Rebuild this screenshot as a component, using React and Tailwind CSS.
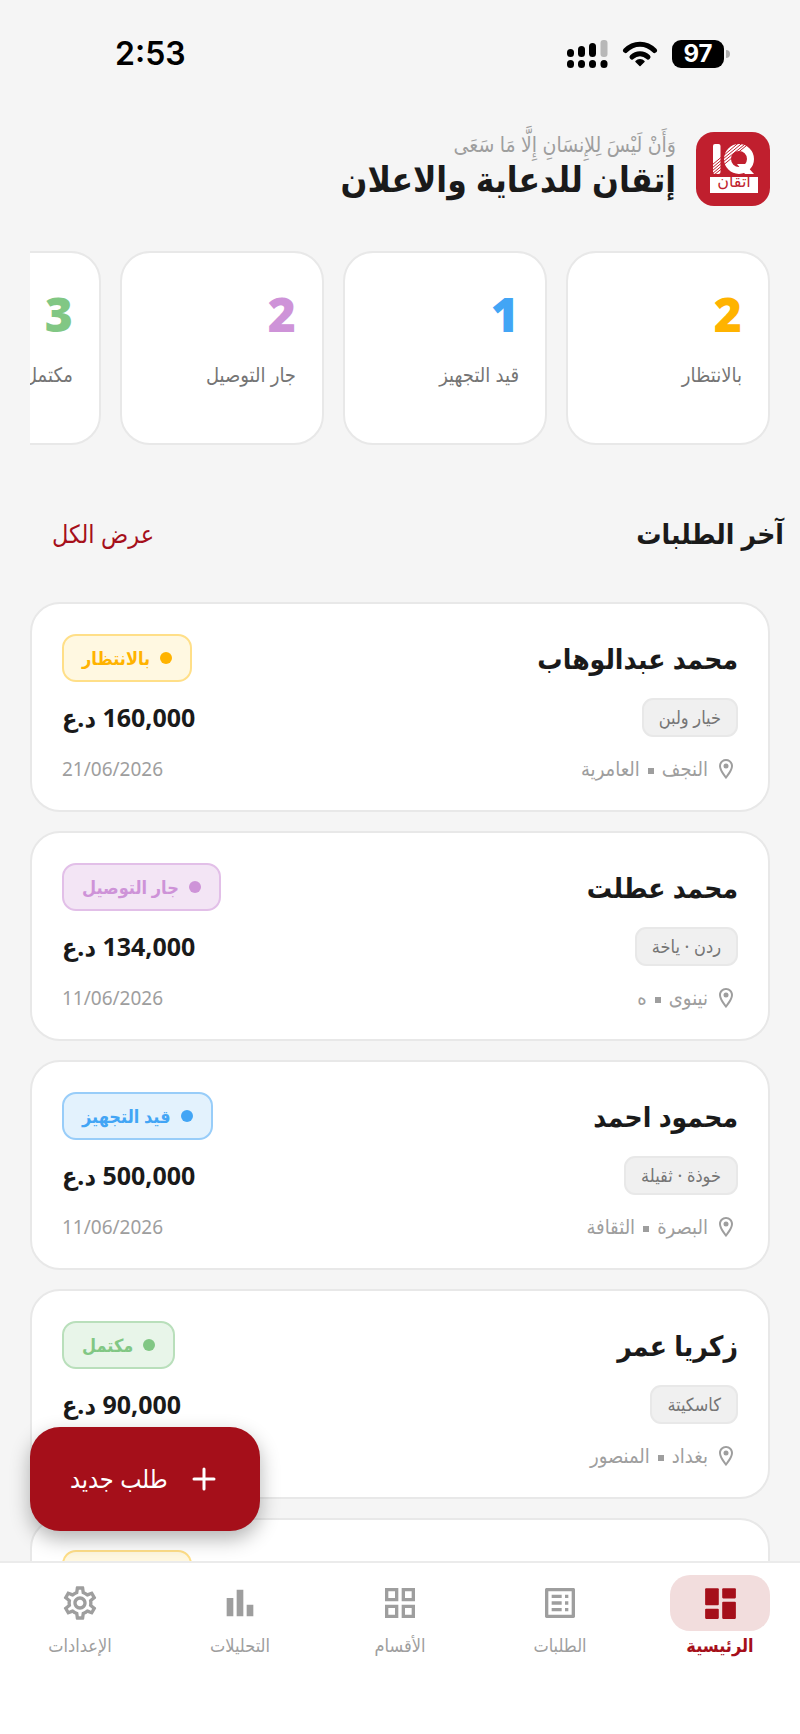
import {
  MdOutlineBarChart,
  MdOutlineGridView,
  MdOutlineListAlt,
  MdOutlineLocationOn,
  MdOutlineSettings,
} from 'react-icons/md';

const stats = [
  { value: 2, label: 'بالانتظار', color: 'text-[#ffb300]' },
  { value: 1, label: 'قيد التجهيز', color: 'text-[#42a5f5]' },
  { value: 2, label: 'جار التوصيل', color: 'text-[#ce93d8]' },
  { value: 3, label: 'مكتمل', color: 'text-[#81c784]' },
];

const statuses = {
  waiting: { label: 'بالانتظار', badge: 'bg-[#fff8e1] border-[#ffdf88] text-[#ffb300]', dot: 'bg-[#ffb300]' },
  shipping: { label: 'جار التوصيل', badge: 'bg-[#f3e5f5] border-[#e2bfe8] text-[#ce93d8]', dot: 'bg-[#ce93d8]' },
  preparing: { label: 'قيد التجهيز', badge: 'bg-[#e3f2fd] border-[#98cdf9] text-[#42a5f5]', dot: 'bg-[#42a5f5]' },
  done: { label: 'مكتمل', badge: 'bg-[#e8f5e9] border-[#b9dfbb] text-[#81c784]', dot: 'bg-[#81c784]' },
};

const orders = [
  { id: 1, name: 'محمد عبدالوهاب', items: 'خيار ولبن', city: 'النجف', area: 'العامرية', status: 'waiting', price: '160,000', date: '21/06/2026' },
  { id: 2, name: 'محمد عطلت', items: 'ردن · ياخة', city: 'نينوى', area: 'ه', status: 'shipping', price: '134,000', date: '11/06/2026' },
  { id: 3, name: 'محمود احمد', items: 'خوذة · ثقيلة', city: 'البصرة', area: 'الثقافة', status: 'preparing', price: '500,000', date: '11/06/2026' },
  { id: 4, name: 'زكريا عمر', items: 'كاسكيتة', city: 'بغداد', area: 'المنصور', status: 'done', price: '90,000', date: '11/06/2026' },
  { id: 5, name: 'محمد حسن', items: 'خيار ولبن', city: 'بغداد', area: 'المنصور', status: 'waiting', price: '75,000', date: '10/06/2026' },
];

const DashboardIcon = () => (
  <svg viewBox="0 0 24 24" className="size-[41px]" fill="currentColor" aria-hidden="true">
    <rect x="3" y="3" width="8" height="10" rx="0.6" />
    <rect x="3" y="15" width="8" height="6" rx="0.6" />
    <rect x="13" y="11" width="8" height="10" rx="0.6" />
    <rect x="13" y="3" width="8" height="6" rx="0.6" />
  </svg>
);

const StatusBar = () => (
  <div dir="ltr" className="flex items-center justify-between h-[108px] pl-[115px] pr-[70px] text-black">
    <span className="font-[Inter] font-semibold text-[32px]">2:53</span>
    <div className="flex items-center gap-[14px]">
      <svg viewBox="0 0 41 30" className="w-[41px] h-[30px]" aria-hidden="true">
        <rect x="0" y="10" width="7" height="8" rx="3.5" />
        <rect x="11" y="7" width="7" height="11" rx="3.5" />
        <rect x="22" y="4" width="7" height="14" rx="3.5" />
        <rect x="33.5" y="1" width="7" height="17" rx="3" fill="#b8b8b8" />
        <rect x="0" y="21" width="7" height="8" rx="3.5" />
        <rect x="11" y="21" width="7" height="8" rx="3.5" />
        <rect x="22" y="21" width="7" height="8" rx="3.5" />
        <rect x="33.5" y="21" width="7" height="8" rx="3.5" />
      </svg>
      <svg viewBox="0 0 36 28" className="w-[36px] h-[28px]" fill="none" stroke="currentColor" strokeWidth="5" strokeLinecap="round" aria-hidden="true">
        <path d="M3.5 10.5C11.5 2 24.5 2 32.5 10.5" />
        <path d="M10 17C14.5 12.5 21.5 12.5 26 17" />
        <path d="M18 25.5l-4-4c2-2.2 6-2.2 8 0z" fill="currentColor" strokeWidth="1.5" strokeLinejoin="round" />
      </svg>
      <div className="flex items-center gap-[2px]">
        <span className="flex items-center justify-center w-[52px] h-7 rounded-[9px] bg-black text-white font-[Inter] font-bold text-2xl">97</span>
        <span className="w-1 h-2 rounded-r-full bg-[#b0b0b0]" />
      </div>
    </div>
  </div>
);

const Logo = () => (
  <svg viewBox="0 0 74 74" className="size-[74px] shrink-0" role="img" aria-label="IQ">
    <rect width="74" height="74" rx="18" fill="#c01f2e" />
    <rect x="17" y="12" width="7.5" height="30" rx="2" fill="#fff" />
    <ellipse cx="43" cy="27" rx="11.5" ry="11.5" fill="none" stroke="#fff" strokeWidth="7" />
    <path d="M41 32h8l9 10h-9z" fill="#fff" />
    {/* hatching cut into the foot of the I and the upper left of the Q */}
    <g stroke="#c01f2e" strokeWidth="1">
      <path d="M16 33l9.500-8M16 36l9.500-8M16 39l9.500-8M16 42l9.500-8M18 43l8-6.500" />
      <path d="M27 24l16-13.500M27 27l20-16.500M27 30l24-19.500M28 32.500l9-7.500M42 20.500l11-9" />
    </g>
    <rect x="14" y="45" width="48" height="16" fill="#fff" />
    <text x="38" y="55" textAnchor="middle" fill="#c01f2e" fontSize="16" fontFamily="DejaVu Sans">اتقان</text>
  </svg>
);

const Header = () => (
  <header className="flex items-start gap-5 px-[30px] pt-6">
    <Logo />
    <div className="flex flex-col">
      <p className="text-[21px] leading-6 text-[#9e9e9e]">وَأَنْ لَيْسَ لِلإِنسَانِ إِلَّا مَا سَعَى</p>
      <h1 className="text-[35px] leading-[46px] font-bold text-[#1a1a1a]">إتقان للدعاية والاعلان</h1>
    </div>
  </header>
);

const StatCard = ({ value, label, color }) => (
  <div className="w-[204px] h-[194px] shrink-0 bg-white border-2 border-[#e8e8e8] rounded-[30px] px-[26px] pt-7">
    <p className={`text-5xl leading-[66px] font-black ${color}`}>{value}</p>
    <p className="mt-3 text-xl leading-8 text-[#757575] whitespace-nowrap">{label}</p>
  </div>
);

const OrderCard = ({ order }) => {
  const status = statuses[order.status];
  return (
    <article className="flex justify-between h-[210px] shrink-0 bg-white border-2 border-[#e8e8e8] rounded-[30px] px-[30px] pt-[30px]">
      <div className="flex flex-col items-start">
        <h3 className="text-[28px] leading-[48px] font-bold text-[#1a1a1a]">{order.name}</h3>
        <span className="mt-4 px-[15px] h-[39px] leading-[35px] text-lg text-[#757575] bg-[#f0f0f0] border-2 border-[#e8e8e8] rounded-[11px]">{order.items}</span>
        <p className="mt-4 flex items-center gap-[6px] text-xl leading-8 text-[#9e9e9e]">
          <MdOutlineLocationOn className="size-6" />
          {order.city}
          <span className="size-[6px] mt-1 mx-[2px] bg-[#9e9e9e]" />
          {order.area}
        </p>
      </div>
      <div className="flex flex-col items-end">
        <span className={`flex items-center gap-[10px] h-12 px-[18px] border-2 rounded-[14px] text-lg font-bold ${status.badge}`}>
          <span className={`size-3 rounded-full ${status.dot}`} />
          {status.label}
        </span>
        <p className="mt-4 text-[25px] leading-[39px] font-bold text-[#1a1a1a]">{order.price} د.ع</p>
        <time className="mt-4 text-[19px] leading-8 text-[#9e9e9e]">{order.date}</time>
      </div>
    </article>
  );
};

const tabs = [
  { label: 'الرئيسية', icon: <DashboardIcon />, active: true },
  { label: 'الطلبات', icon: <MdOutlineListAlt className="size-10 -scale-x-100" /> },
  { label: 'الأقسام', icon: <MdOutlineGridView className="size-10" /> },
  { label: 'التحليلات', icon: <MdOutlineBarChart className="size-10" /> },
  { label: 'الإعدادات', icon: <MdOutlineSettings className="size-10" /> },
];

const BottomNav = () => (
  <nav className="flex items-start h-[173px] shrink-0 bg-white border-t-2 border-[#ebebeb] pt-3">
    {tabs.map((tab) => (
      <a
        key={tab.label}
        href="#"
        className={`flex flex-1 flex-col items-center text-lg ${tab.active ? 'text-[#a50f1a] font-bold' : 'text-[#9e9e9e]'}`}
      >
        <span className={`flex items-center justify-center w-[100px] h-14 rounded-[20px] ${tab.active ? 'bg-[#f2dddd]' : ''}`}>
          {tab.icon}
        </span>
        <span className="leading-7">{tab.label}</span>
      </a>
    ))}
  </nav>
);

export default function App() {
  return (
    <div dir="rtl" lang="ar" className="relative flex flex-col h-screen overflow-hidden bg-[#f5f5f5] font-['Noto_Sans','DejaVu_Sans_Condensed','DejaVu_Sans',sans-serif]">
      <StatusBar />
      <Header />
      <main className="flex flex-col flex-1 min-h-0 overflow-hidden pt-[45px]">
        <section className="flex gap-[19px] mx-[30px] overflow-hidden shrink-0">
          {stats.map((stat) => (
            <StatCard key={stat.label} {...stat} />
          ))}
        </section>
        <div className="flex items-center justify-between shrink-0 mt-16 pr-4 pl-[52px]">
          <h2 className="text-[28px] leading-[48px] font-bold text-[#1a1a1a]">آخر الطلبات</h2>
          <a href="#" className="text-[25px] leading-[48px] text-[#a50f1a]">عرض الكل</a>
        </div>
        <section className="flex flex-col gap-[19px] mt-[45px] mx-[30px]">
          {orders.map((order) => (
            <OrderCard key={order.id} order={order} />
          ))}
        </section>
      </main>
      <button
        type="button"
        className="absolute left-[30px] bottom-[203px] flex items-center gap-5 px-10 h-[104px] rounded-[30px] bg-[#a50f1a] text-white text-[25px] shadow-[0_8px_20px_rgba(0,0,0,0.3)]"
      >
        <svg viewBox="0 0 32 32" className="size-8" stroke="currentColor" strokeWidth="3" strokeLinecap="round" aria-hidden="true">
          <path d="M16 6v20M6 16h20" />
        </svg>
        طلب جديد
      </button>
      <BottomNav />
    </div>
  );
}
